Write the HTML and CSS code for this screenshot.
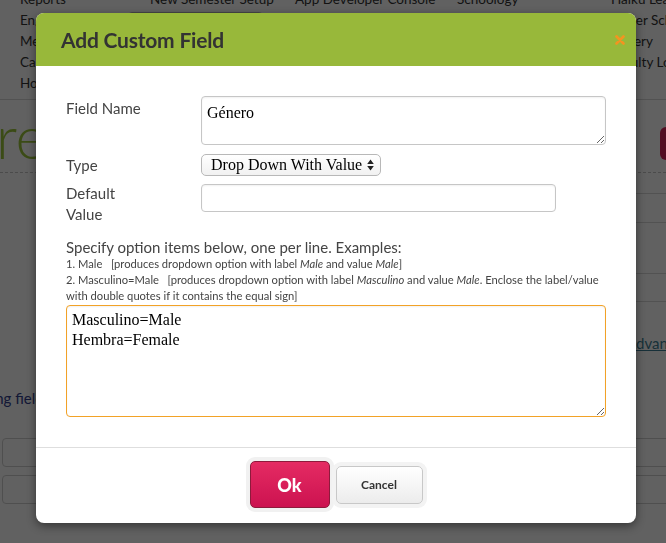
FILE: index.html
```html
<!DOCTYPE html>
<html lang="en">
<head>
  <meta charset="UTF-8">
  <title>Add Custom Field</title>
  <link rel="stylesheet" href="styles.css">
</head>
<body>

  <div class="page">
    <div class="topnav">
      <span>Reports</span><span>New Semester Setup</span><span>App Developer Console</span><span>Schoology</span><span>Haiku Learning</span>
      <span>English</span><span class="nav-box"></span><span>Attendance</span><span>Athletics</span><span>Upper School</span>
      <span>Media Center</span><span>Grades</span><span>Clubs</span><span>Parents</span><span>Gallery</span>
      <span>Calendar</span><span>Courses</span><span>Events</span><span>Alumni</span><span>Faculty Lounge</span>
      <span>Homework</span><span></span><span></span><span></span><span></span>
    </div>

    <div class="banner">
      <span class="logo">re</span>
      <span class="banner-btn"></span>
    </div>

    <div class="list">
      <div class="list-row r1"></div>
      <div class="list-row r2"></div>
      <div class="list-row r3"></div>
      <div class="list-row r4"></div>
    </div>

    <div class="more"><a href="#">Advanced</a></div>
    <div class="caption">Showing fields</div>

    <div class="field-box"></div>
    <div class="field-box"></div>
  </div>

  <div class="overlay"></div>

  <div class="modal">
    <div class="modal-header">
      <h2>Add Custom Field</h2>
      <svg class="close" width="10" height="10" viewBox="0 0 10 10">
        <path d="M1.5 1.5 L8.5 8.5 M8.5 1.5 L1.5 8.5" stroke="#f39420" stroke-width="2.6" stroke-linecap="round"/>
      </svg>
    </div>

    <div class="modal-body">
      <div class="form-row row-name">
        <label>Field Name</label>
        <textarea class="name-input">Género</textarea>
      </div>
      <div class="form-row row-type">
        <label>Type</label>
        <div class="select">
          <span>Drop Down With Value</span>
          <svg width="7" height="12" viewBox="0 0 7 12">
            <path d="M3.5 0.5 L6.8 5 L0.2 5 Z M3.5 11.5 L6.8 7 L0.2 7 Z" fill="#222"/>
          </svg>
        </div>
      </div>
      <div class="form-row row-default">
        <label>Default<br>Value</label>
        <input type="text" class="default-input">
      </div>

      <p class="hint">Specify option items below, one per line. Examples:</p>
      <p class="example">1. Male &nbsp; [produces dropdown option with label <em>Male</em> and value <em>Male</em>]</p>
      <p class="example">2. Masculino=Male &nbsp; [produces dropdown option with label <em>Masculino</em> and value <em>Male</em>. Enclose the label/value with double quotes if it contains the equal sign]</p>

      <textarea class="options">Masculino=Male
Hembra=Female</textarea>
    </div>

    <div class="modal-footer">
      <button class="btn-ok">Ok</button>
      <button class="btn-cancel">Cancel</button>
    </div>
  </div>

</body>
</html>
```

FILE: styles.css
```css
* {
  box-sizing: border-box;
}

body {
  margin: 0;
  height: 543px;
  overflow: hidden;
  font-family: Lato, "Open Sans", sans-serif;
  background: #fff;
  color: #444;
}

/* page behind the dialog */
.page {
  height: 543px;
  overflow: hidden;
}

.topnav {
  display: grid;
  grid-template-columns: 130px 145px 162px 154px 1fr;
  grid-auto-rows: 21px;
  margin-top: -11px;
  padding: 0 0 5px 20px;
  border-bottom: 1px solid #d8d8d8;
  font-size: 13.5px;
  line-height: 21px;
  color: #333;
  white-space: nowrap;
}

.nav-box {
  margin: 2px 0 0 -22px;
  width: 135px;
  height: 19px;
  border: 1px solid #bbb;
  border-radius: 4px;
}

.banner {
  height: 73px;
  display: flex;
  justify-content: space-between;
  align-items: center;
  border-bottom: 1px dashed #c4c4c4;
}

.logo {
  margin-left: -4px;
  font-size: 60px;
  font-weight: 300;
  line-height: 1;
  color: #9cc63c;
}

.banner-btn {
  align-self: flex-start;
  margin: 27px -74px 0 0;
  width: 80px;
  height: 33px;
  border-radius: 6px;
  background: #d9245a;
}

.list {
  margin-left: 320px;
}

.list-row {
  border-bottom: 1px solid #d8d8d8;
}

.r1 { height: 21px; }
.r2 { height: 29px; }
.r3 { height: 51px; }
.r4 { height: 28px; }

.more {
  margin-top: 31px;
  padding-left: 626px;
  font-size: 15px;
  line-height: 20px;
  white-space: nowrap;
}

.more a {
  color: #3e7f95;
}

.caption {
  margin: 35px 0 0 -45px;
  font-size: 15px;
  line-height: 20px;
  color: #33418e;
}

.field-box {
  margin: 30px -20px 0 2px;
  height: 29px;
  border: 1px solid #d0d0d0;
  border-radius: 4px;
}

.field-box + .field-box {
  margin-top: 8px;
}

.overlay {
  position: fixed;
  top: 0;
  left: 0;
  right: 0;
  bottom: 0;
  background: rgba(0, 0, 0, 0.62);
}

/* dialog */
.modal {
  position: absolute;
  top: 13px;
  left: 36px;
  width: 600px;
  background: #fff;
  border-radius: 8px;
  overflow: hidden;
  box-shadow: 0 3px 10px rgba(0, 0, 0, 0.45);
}

.modal-header {
  height: 53px;
  display: flex;
  align-items: center;
  justify-content: space-between;
  padding: 0 11px 0 25px;
  background: #98b83a;
}

.modal-header h2 {
  margin: 0;
  font-size: 21px;
  font-weight: 700;
  letter-spacing: -0.2px;
  color: #333;
}

.close {
  display: block;
  margin-top: 1px;
}

.modal-body {
  padding: 30px 30px 30px;
}

.form-row {
  display: grid;
  grid-template-columns: 135px 1fr;
  align-items: start;
}

.form-row label {
  font-size: 15px;
  line-height: 20px;
  color: #444;
}

.row-name label {
  padding-top: 2px;
}

.row-type {
  margin-top: 9px;
  align-items: center;
}

.row-default {
  margin-top: 7px;
}

.row-default label {
  line-height: 21px;
}

textarea,
.default-input {
  font-family: "Liberation Serif", serif;
  font-size: 16px;
  color: #000;
  border: 1px solid #c6c6c6;
  border-radius: 4px;
  box-shadow: inset 0 1px 2px rgba(0, 0, 0, 0.06);
  outline: none;
}

.name-input {
  display: block;
  width: 405px;
  height: 49px;
  padding: 6px 5px 5px;
  line-height: 20px;
}

.select {
  display: flex;
  align-items: center;
  justify-content: space-between;
  width: 180px;
  height: 22px;
  padding: 0 6px 0 9px;
  border: 1px solid #b8b8b8;
  border-radius: 5px;
  background: linear-gradient(#fff, #f1f1f1);
  font-family: "Liberation Serif", serif;
  font-size: 16px;
  color: #000;
}

.default-input {
  width: 355px;
  height: 28px;
  margin-top: 1px;
}

.hint {
  margin: 13px 0 0;
  font-size: 15px;
  line-height: 18px;
  color: #444;
}

.example {
  margin: 0;
  font-size: 11.2px;
  line-height: 16px;
  color: #444;
}

.options {
  display: block;
  width: 100%;
  height: 112px;
  margin-top: 1px;
  padding: 4px 5px;
  line-height: 20px;
  border-color: #f2a227;
}

.modal-footer {
  display: flex;
  justify-content: center;
  align-items: center;
  gap: 6px;
  padding: 13px 0 15px;
  border-top: 1px solid #dedede;
}

.btn-ok {
  width: 80px;
  height: 47px;
  border: 1px solid #8e1a3c;
  border-radius: 5px;
  background: linear-gradient(#e52b63, #cc1250);
  font-family: Lato, sans-serif;
  font-size: 18px;
  font-weight: 900;
  color: #fff;
  box-shadow: 0 0 0 4px #f1f1f1;
}

.btn-cancel {
  width: 87px;
  height: 38px;
  border: 1px solid #c8c8c8;
  border-radius: 5px;
  background: linear-gradient(#fff, #ececec);
  font-family: Lato, sans-serif;
  font-size: 12px;
  font-weight: 700;
  color: #333;
  box-shadow: 0 0 0 4px #f3f3f3;
}
```
